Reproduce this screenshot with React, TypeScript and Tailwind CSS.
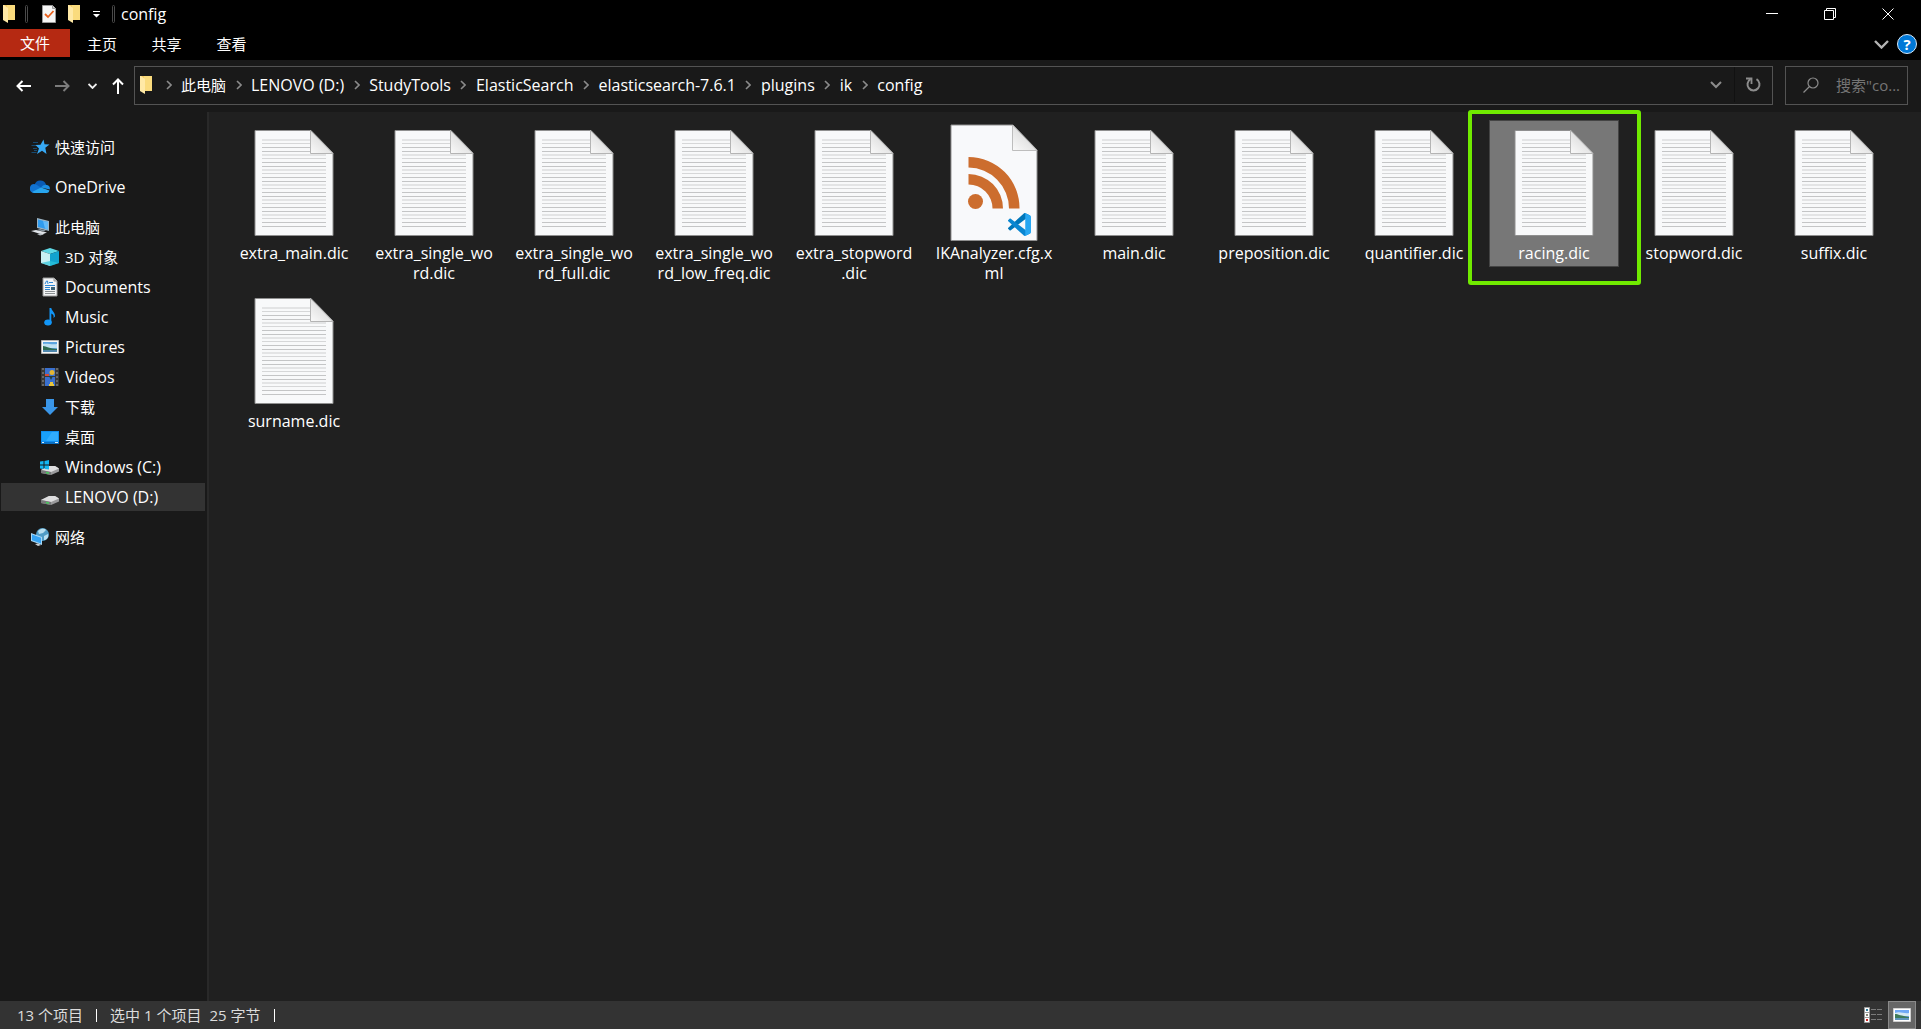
import React from 'react';

interface FileEntry {
  name: string;
  type: 'dic' | 'xml';
  selected?: boolean;
}

interface NavEntry {
  label: string;
  icon: React.ReactNode;
  nested?: boolean;
  active?: boolean;
  spaced?: boolean;
}

const DOC_LINES = [0, 1, 2, 3, 4, 5];

// Chinese labels are set one pixel smaller than latin ones
const labelSize = (label: string) => (/[\u4e00-\u9fff]/.test(label) ? 'text-[15px]' : 'text-[16px]');

const FolderIcon = () => (
  <svg width="12" height="18" viewBox="0 0 12 18" className="shrink-0">
    <path d="M1 0h10l1 1v14H1z" fill="#f3ca63" />
    <path d="M4 0h8v15H4z" fill="#fadb7d" />
    <path d="M0 0h1l4 3v15L0 15z" fill="#ffe9a6" />
  </svg>
);

const ChevronRight = () => (
  <svg width="6" height="10" viewBox="0 0 6 10" fill="none" stroke="#8a8a8a" strokeWidth="1.6">
    <path d="M1 1l4 4-4 4" />
  </svg>
);

const DocumentIcon = () => (
  <svg width="80" height="106" viewBox="0 0 80 106">
    <defs>
      <linearGradient id="fold" x1="0" y1="1" x2="0.6" y2="0.3">
        <stop offset="0" stopColor="#fafafa" />
        <stop offset="1" stopColor="#dcdcdc" />
      </linearGradient>
    </defs>
    <path d="M1 .5h56L79 23v82.500H1z" fill="#f8f9fa" stroke="#8f8f8f" strokeWidth="1" />
    {DOC_LINES.map((i) => {
      // the first group stops at the folded corner
      const end = i === 0 ? 56 : 72;
      return (
        <g key={i} transform={`translate(0 ${i * 15})`}>
          <path d={`M8 9H${end}v2H8z`} fill="#e3e4e5" />
          <path d={`M8 13H${end}v1H8z`} fill="#d6d7d8" />
          <path d={`M8 17H${end}v1H8z`} fill="#c4c5c6" />
          <path d={`M8 21H${end}v1H8z`} fill="#c4c5c6" />
        </g>
      );
    })}
    <path d="M56.500 .5v23H79z" fill="url(#fold)" stroke="#b4b4b4" />
  </svg>
);

const XmlIcon = () => (
  <svg width="88" height="118" viewBox="0 0 88 118">
    <path d="M1 1h62l24 25v90.500H1z" fill="#f8f9fb" stroke="#8f8f8f" />
    <path d="M62.500 1v25.500H87z" fill="url(#fold)" stroke="#bdbdbd" />
    <g fill="#cc6d2e">
      <circle cx="25.500" cy="77.500" r="7.500" />
      <path d="M18.500 33a51 51 0 0 1 51 51.500h-10.500a41 41 0 0 0-40.500-41z" />
      <path d="M18.500 50a34.500 34.500 0 0 1 34.500 34.500h-10.500a24 24 0 0 0-24-24z" />
    </g>
    <g transform="translate(58 89) scale(.23)">
      <path
        d="M96.500 10.800L75.900.9c-2.400-1.100-5.300-.7-7.100 1.200L1.300 63.600c-1.800 1.600-1.800 4.500 0 6.100l5.500 5c1.500 1.400 3.700 1.500 5.300.3L93.400 13.400z"
        fill="#0076b9"
      />
      <path
        d="M96.500 89.200l-20.600 9.900c-2.400 1.200-5.300.7-7.100-1.200L1.300 36.400c-1.800-1.600-1.800-4.500 0-6.100l5.500-5c1.500-1.400 3.700-1.500 5.300-.3l81.300 61.600z"
        fill="#0a86d1"
      />
      <path
        d="M75.900 99.100c-2.400 1.200-5.300.7-7.100-1.200 2.300 2.300 6.200.7 6.200-2.600V4.700c0-3.300-3.900-4.900-6.200-2.600 1.800-1.900 4.700-2.300 7.100-1.200l20.600 9.900c2.100 1 3.500 3.200 3.500 5.600v67.200c0 2.400-1.400 4.600-3.500 5.600z"
        fill="#27a7f2"
      />
    </g>
  </svg>
);

const QuickAccessIcon = () => (
  <svg width="20" height="20" viewBox="0 0 20 20">
    <path d="M3 5.500h5M1.500 8.500h5M3 11.500h4M1.500 15.500h5M4 13.500h3" stroke="#164a72" strokeWidth="1" />
    <path d="M13.500 2.500l1 4.700 5 .3-4.200 3.200 1.200 6.300-4.500-3.200-5 3.200 2-5.500-3.500-3.500 5-.3z" fill="#37a9f5" />
  </svg>
);

const OneDriveIcon = () => (
  <svg width="20" height="20" viewBox="0 0 20 20">
    <path d="M4.500 8a6 6 0 0 1 11.500-.5L12 11z" fill="#0a5bb5" />
    <path d="M0 11.500A4 4 0 0 1 6 7.500l6 3.500-8.500 5A4 4 0 0 1 0 11.500z" fill="#1173d2" />
    <path d="M11 10.500a5.500 5.500 0 0 1 6-2.500 4 4 0 0 1 2.800 4.500z" fill="#1b8de4" />
    <path d="M2 15l9-4.500 8.500 3a3 3 0 0 1-2.500 2.500H4z" fill="#28a5ee" />
  </svg>
);

const ComputerIcon = () => (
  <svg width="20" height="20" viewBox="0 0 20 20">
    <path d="M7 1l12 3v10L7 11z" fill="#9db4c4" />
    <path d="M8 2.500l10 2.500v7.500L8 10z" fill="#2f9bee" />
    <path d="M13 4l5 1v7.500l-3-1z" fill="#62b9f8" />
    <path d="M10 12l6 1.500-2 1-7-1.500z" fill="#8a98a3" />
    <path d="M1 14l5-1 11 2.500-5 2z" fill="#dfe3e8" />
    <path d="M7 17l4-.5 3 1-4 1z" fill="#b4bac0" />
  </svg>
);

const CubeIcon = () => (
  <svg width="20" height="20" viewBox="0 0 20 20">
    <path d="M1 4l9-3 9 3-9 3z" fill="#5fd9e6" />
    <path d="M1 4l9 3v12l-9-3z" fill="#c9f1f3" />
    <path d="M19 4l-9 3v12l9-3z" fill="#12a3cf" />
    <path d="M10 14l9 2-9 3-9-3z" fill="#2ec5da" opacity=".7" />
  </svg>
);

const DocumentsIcon = () => (
  <svg width="20" height="20" viewBox="0 0 20 20">
    <path d="M3 1h11l3 3v15H3z" fill="#f3f4f5" stroke="#9a9a9a" />
    <path d="M14 1v3h3" fill="#ccc" stroke="#9a9a9a" />
    <path d="M5 7l1.500-3h1L8 7M9 5.500h4" stroke="#2c86d3" fill="none" />
    <path d="M5 8.500h10M5 10.500h5M5 12.500h5" stroke="#2c86d3" />
    <path d="M11 10h4v3h-4z" fill="#3c6276" />
    <path d="M5 14.500h10M5 16.500h10" stroke="#8b8f92" />
  </svg>
);

const MusicIcon = () => (
  <svg width="20" height="20" viewBox="0 0 20 20" fill="#1296f7">
    <ellipse cx="8" cy="15.500" rx="3.800" ry="3" />
    <path d="M9.500 1h1.800c.3 3 4 4.200 3.700 8.500l-1.500 1.500c.5-2.600-.4-3.800-2.200-4.500V16H9.500z" />
  </svg>
);

const PicturesIcon = () => (
  <svg width="20" height="20" viewBox="0 0 20 20">
    <path d="M1.500 3.500h17v13h-17z" fill="#f6f6f6" stroke="#b5b5b5" />
    <path d="M3 5h14v10H3z" fill="#5ca4df" />
    <path d="M3 7c4-1 9 1 14 0v4H3z" fill="#bfe0f2" />
    <path d="M3 9c3 0 7 3 14 3v1H3z" fill="#2e6b50" />
    <path d="M3 13h14v2H3z" fill="#4f87ad" />
  </svg>
);

const VideosIcon = () => (
  <svg width="20" height="20" viewBox="0 0 20 20">
    <path d="M1 1h18v18H1z" fill="#383838" />
    <path d="M3 1v18M17 1v18" stroke="#777" strokeWidth="1.500" strokeDasharray="2 2" />
    <path d="M5 1h10v8H5zM5 10h10v9H5z" fill="#3a70cf" />
    <circle cx="12" cy="5.500" r="2.500" fill="#e3b532" />
    <path d="M5 7h4v2H5z" fill="#d64a35" />
    <path d="M9 9h4l-2 4z" fill="#263f3c" />
    <path d="M9 17h5v2H9zM10 15h3v2h-3z" fill="#e8c53d" />
  </svg>
);

const DownloadIcon = () => (
  <svg width="20" height="20" viewBox="0 0 20 20">
    <path d="M6 2h8v8h4l-8 8-8-8h4z" fill="#3a96e8" />
  </svg>
);

const DesktopIcon = () => (
  <svg width="20" height="20" viewBox="0 0 20 20">
    <path d="M1 4h18v13H1z" fill="#0f8df0" />
    <path d="M2 5h16v9H2z" fill="#19a0fb" />
    <path d="M12 5h6v9H6z" fill="#30acff" />
    <path d="M1 15h18v2H1z" fill="#0a6fc2" />
    <path d="M2 15.500h2M15 15.500h3" stroke="#d9efff" strokeWidth="1" />
  </svg>
);

const DriveShape = () => (
  <>
    <path d="M1 13l8-4h6l4 2.500v3L11 18 1 16z" fill="#9a9a9c" />
    <path d="M1 13l8-4h6l4 2.500-8 3.500z" fill="#dededf" />
    <path d="M1 13l10 2v3L1 16z" fill="#77797a" />
    <path d="M6 15l3 .6v1.200L6 16.200z" fill="#3ddc57" />
  </>
);

const DriveIcon = () => (
  <svg width="20" height="20" viewBox="0 0 20 20">
    <DriveShape />
  </svg>
);

const SystemDriveIcon = () => (
  <svg width="20" height="20" viewBox="0 0 20 20">
    <DriveShape />
    <path d="M0 4.500L3.500 4v3.500H0zM4.500 4L9 3v4.500H4.500zM0 8.500h3.500V12L0 11.500zM4.500 8.500H9v4L4.500 12z" fill="#13b5f0" />
  </svg>
);

const NetworkIcon = () => (
  <svg width="20" height="20" viewBox="0 0 20 20">
    <circle cx="12.500" cy="7.500" r="6.500" fill="#4f9cc6" />
    <path d="M8 4c3-3 7-2.500 8-1l-3 3-4 1zM14 9l4-2c1 4-2 6-4 6z" fill="#b8dff0" />
    <path d="M1 6l11 4v8L1 14z" fill="#a8d8f7" />
    <path d="M2 7.500l9 3.300v5.700l-9-3.300z" fill="#35a3f3" />
    <path d="M5 17l3-.5 3 1.500-3 1z" fill="#cbd1d6" />
  </svg>
);

const PATH = ['此电脑', 'LENOVO (D:)', 'StudyTools', 'ElasticSearch', 'elasticsearch-7.6.1', 'plugins', 'ik', 'config'];

const NAV: NavEntry[] = [
  { label: '快速访问', icon: <QuickAccessIcon /> },
  { label: 'OneDrive', icon: <OneDriveIcon />, spaced: true },
  { label: '此电脑', icon: <ComputerIcon />, spaced: true },
  { label: '3D 对象', icon: <CubeIcon />, nested: true },
  { label: 'Documents', icon: <DocumentsIcon />, nested: true },
  { label: 'Music', icon: <MusicIcon />, nested: true },
  { label: 'Pictures', icon: <PicturesIcon />, nested: true },
  { label: 'Videos', icon: <VideosIcon />, nested: true },
  { label: '下载', icon: <DownloadIcon />, nested: true },
  { label: '桌面', icon: <DesktopIcon />, nested: true },
  { label: 'Windows (C:)', icon: <SystemDriveIcon />, nested: true },
  { label: 'LENOVO (D:)', icon: <DriveIcon />, nested: true, active: true },
  { label: '网络', icon: <NetworkIcon />, spaced: true },
];

const FILES: FileEntry[] = [
  { name: 'extra_main.dic', type: 'dic' },
  { name: 'extra_single_wo\nrd.dic', type: 'dic' },
  { name: 'extra_single_wo\nrd_full.dic', type: 'dic' },
  { name: 'extra_single_wo\nrd_low_freq.dic', type: 'dic' },
  { name: 'extra_stopword\n.dic', type: 'dic' },
  { name: 'IKAnalyzer.cfg.x\nml', type: 'xml' },
  { name: 'main.dic', type: 'dic' },
  { name: 'preposition.dic', type: 'dic' },
  { name: 'quantifier.dic', type: 'dic' },
  { name: 'racing.dic', type: 'dic', selected: true },
  { name: 'stopword.dic', type: 'dic' },
  { name: 'suffix.dic', type: 'dic' },
  { name: 'surname.dic', type: 'dic' },
];

const TitleBar = () => (
  <header className="flex h-[29px] items-start bg-black pr-1">
    <div className="flex h-7 flex-1 items-center pl-[3px]">
      <FolderIcon />
      <span className="ml-[10px] h-[18px] w-[3px] rounded-sm border border-[#4a4a4a]" />
      <button aria-label="属性" className="ml-[14px]">
        <svg width="14" height="18" viewBox="0 0 14 18">
          <path d="M.5.500h10l3 3v14H.5z" fill="#f5f5f5" stroke="#9a9a9a" />
          <path d="M10.500.500v3h3" fill="#ccc" stroke="#9a9a9a" />
          <path d="M3 9l3 3 5.500-6" fill="none" stroke="#e8601c" strokeWidth="1.800" />
        </svg>
      </button>
      <button aria-label="新建文件夹" className="ml-3">
        <FolderIcon />
      </button>
      <button aria-label="自定义快速访问工具栏" className="ml-3">
        <svg width="9" height="8" viewBox="0 0 9 8" fill="#fff">
          <path d="M1 1h7v1H1zM1 4h7L4.500 7.500z" />
        </svg>
      </button>
      <span className="ml-[11px] h-[18px] w-[3px] rounded-sm border border-[#4a4a4a]" />
      <h1 className="ml-[6px] text-[16px]">config</h1>
    </div>
    <button aria-label="最小化" className="flex h-7 w-[58px] items-center justify-center">
      <svg width="12" height="12" viewBox="0 0 12 12">
        <path d="M0 5h12v1H0z" fill="#fff" />
      </svg>
    </button>
    <button aria-label="还原" className="flex h-7 w-[58px] items-center justify-center">
      <svg width="12" height="12" viewBox="0 0 12 12" fill="none" stroke="#fff">
        <path d="M.5 2.500h9v9h-9zM2.500 2.500v-2h9v9h-2" />
      </svg>
    </button>
    <button aria-label="关闭" className="flex h-7 w-[58px] items-center justify-center">
      <svg width="12" height="12" viewBox="0 0 12 12" stroke="#fff">
        <path d="M.5.500l11 11M11.500.500l-11 11" />
      </svg>
    </button>
  </header>
);

const Ribbon = () => (
  <div className="flex h-[31px] items-start bg-black pr-1 text-[15px]">
    <button className="h-7 w-[70px] bg-[#b52912]">文件</button>
    <button className="h-[30px] w-16">主页</button>
    <button className="h-[30px] w-[65px]">共享</button>
    <button className="h-[30px] w-[65px]">查看</button>
    <div className="ml-auto flex h-[30px] items-center gap-2">
      <button aria-label="展开功能区">
        <svg width="15" height="9" viewBox="0 0 15 9" fill="none" stroke="#b4b4b4" strokeWidth="2.400">
          <path d="M1 1l6.500 6.500L14 1" />
        </svg>
      </button>
      <button
        aria-label="帮助"
        className="flex h-5 w-5 items-center justify-center rounded-full border border-[#d6e8f8] bg-[#0078d7] leading-4 font-bold"
      >
        ?
      </button>
    </div>
  </div>
);

const AddressBar = () => (
  <div className="flex bg-[#191919] pt-[6px] pr-[13px] pb-[7px]">
    <div className="flex w-[134px] shrink-0 items-center pl-4">
      <button aria-label="后退">
        <svg width="15" height="12" viewBox="0 0 15 12" fill="none" stroke="#fff" strokeWidth="2">
          <path d="M1 6h14M6.500 1L1.500 6l5 5" />
        </svg>
      </button>
      <button aria-label="前进" className="ml-6">
        <svg width="15" height="12" viewBox="0 0 15 12" fill="none" stroke="#7c7c7c" strokeWidth="2">
          <path d="M0 6h14M8.500 1l5 5-5 5" />
        </svg>
      </button>
      <button aria-label="最近浏览的位置" className="ml-[18px]">
        <svg width="9" height="6" viewBox="0 0 9 6" fill="none" stroke="#eee" strokeWidth="1.800">
          <path d="M.5 1l4 4 4-4" />
        </svg>
      </button>
      <button aria-label="上移" className="ml-[15px]">
        <svg width="12" height="16" viewBox="0 0 12 16" fill="none" stroke="#fff" strokeWidth="2">
          <path d="M6 16V1.500M1 6.500l5-5 5 5" />
        </svg>
      </button>
    </div>
    <nav className="flex h-[39px] flex-1 items-center border border-[#535353] pb-[2px] pl-[5px]">
      <FolderIcon />
      {PATH.map((part) => (
        <React.Fragment key={part}>
          <span className="flex w-[25px] justify-center first-of-type:ml-1">
            <ChevronRight />
          </span>
          <a href="#" className={`whitespace-nowrap ${labelSize(part)}`}>
            {part}
          </a>
        </React.Fragment>
      ))}
      <button aria-label="上一个位置" className="mr-3 ml-auto">
        <svg width="12" height="8" viewBox="0 0 12 8" fill="none" stroke="#8c8c8c" strokeWidth="2">
          <path d="M1 1l5 5 5-5" />
        </svg>
      </button>
      <button aria-label="刷新" className="flex h-full w-[38px] items-center justify-center border-l border-[#111]">
        <svg width="15" height="15" viewBox="0 0 15 15" fill="none" stroke="#8c8c8c" strokeWidth="2">
          <path d="M10.500 2.200a6 6 0 1 1-6 0" />
          <path d="M0 1.500h5.500V7" strokeWidth="1.800" />
        </svg>
      </button>
    </nav>
    <label className="ml-3 flex h-[39px] w-[123px] items-center border border-[#535353] pb-[2px] pl-[17px]">
      <svg width="16" height="16" viewBox="0 0 16 16" fill="none" stroke="#8c8c8c" strokeWidth="1.200" className="shrink-0">
        <circle cx="10" cy="6" r="5" />
        <path d="M6.500 9.500L.5 15.500" />
      </svg>
      <input
        type="text"
        aria-label="搜索"
        placeholder={'搜索"co...'}
        className="ml-[17px] w-full min-w-0 bg-transparent text-[15px] outline-none placeholder:text-[#757575]"
      />
    </label>
  </div>
);

const Sidebar = () => (
  <aside className="w-[209px] shrink-0 border-r-2 border-[#292929] bg-[#191919] pt-5">
    <ul>
      {NAV.map((item) => (
        <li key={item.label} className={item.spaced ? 'mt-[10px] py-px pr-0.5 pl-px' : 'py-px pr-0.5 pl-px'}>
          <a
            href="#"
            className={`flex h-7 items-center gap-[5px] ${item.nested ? 'pl-[39px]' : 'pl-[29px]'} ${
              item.active ? 'bg-[#333333]' : ''
            }`}
          >
            {item.icon}
            <span className={labelSize(item.label)}>{item.label}</span>
          </a>
        </li>
      ))}
    </ul>
  </aside>
);

const FileTile: React.FC<FileEntry> = ({ name, type, selected }) => (
  <li className="px-[5px]">
    <div
      className={`relative border pb-[3px] text-center ${
        selected ? 'border-[#444444] bg-[#777777]' : 'border-transparent'
      }`}
    >
      <div className={`flex h-[122px] justify-center ${type === 'xml' ? 'pt-[3px]' : 'pt-[9px]'}`}>
        {type === 'xml' ? <XmlIcon /> : <DocumentIcon />}
      </div>
      <p className="text-[16px] leading-5 whitespace-pre">{name}</p>
      {selected && (
        <span className="absolute -top-[11px] -left-[22px] h-[175px] w-[173px] rounded-[3px] border-4 border-[#70ea00]" />
      )}
    </div>
  </li>
);

const StatusBar = () => (
  <footer className="flex h-7 items-center bg-[#333333] pr-[5px] pl-[17px] text-[15px] text-[#dcdcdc]">
    <span>13 个项目</span>
    <span className="mx-[13px] h-[13px] w-px bg-white" />
    <span>选中 1 个项目</span>
    <span className="ml-2">25 字节</span>
    <span className="ml-[13px] h-[13px] w-px bg-white" />
    <button aria-label="详细信息" className="mr-[5px] ml-auto">
      <svg width="19" height="17" viewBox="0 0 19 17">
        <path d="M.5.500h5v5h-5zM.5 5.500h5v5h-5zM.5 10.500h5v5h-5z" fill="#fff" stroke="#9d9d9d" />
        <path d="M2 2h2v2H2z" fill="#2f7d9d" />
        <path d="M2 7h2v2H2z" fill="#887" />
        <path d="M2 12h2v2H2z" fill="#c22" />
        <path d="M7 2.500h5M13 2.500h5M7 7.500h5M13 7.500h5M7 12.500h5M13 12.500h5" stroke="#7b7b7b" />
      </svg>
    </button>
    <button
      aria-label="大缩略图"
      className="flex h-7 w-7 items-center justify-center border border-[#8a8a8a] bg-[#666666]"
    >
      <svg width="18" height="14" viewBox="0 0 18 14">
        <path d="M.5.500h17v13H.5z" fill="#fff" stroke="#d0d0d0" />
        <path d="M2 2h14v10H2z" fill="#6fa8f5" />
        <path d="M2 5c5-2 9 1 14 0v3H2z" fill="#d5e8f2" />
        <path d="M2 6c3 0 6 2 14 3v1H2z" fill="#3f7b5a" />
        <path d="M2 10h14v2H2z" fill="#5f95bd" />
      </svg>
    </button>
  </footer>
);

export default function App() {
  return (
    <div className="flex min-h-screen flex-col bg-[#202020] font-['Open_Sans','Noto_Sans_CJK_SC',sans-serif] leading-5 text-white">
      <TitleBar />
      <Ribbon />
      <AddressBar />
      <div className="flex flex-1">
        <Sidebar />
        <main className="flex-1 px-[15px] pt-2">
          <ul className="grid auto-rows-[168px] grid-cols-[repeat(auto-fill,140px)]">
            {FILES.map((file) => (
              <FileTile key={file.name} {...file} />
            ))}
          </ul>
        </main>
      </div>
      <StatusBar />
    </div>
  );
}
